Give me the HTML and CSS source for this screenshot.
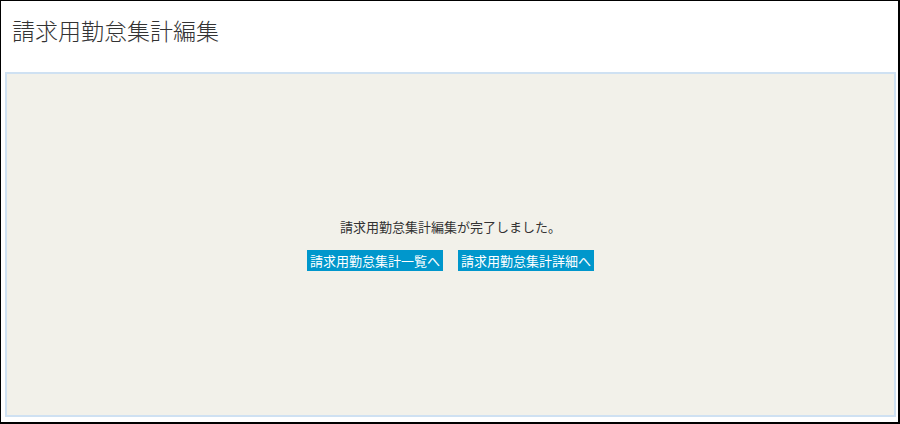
FILE: index.html
```html
<!DOCTYPE html>
<html lang="ja">
<head>
    <meta charset="UTF-8">
    <meta name="viewport" content="width=device-width, initial-scale=1.0">
    <title>請求用勤怠集計編集</title>
    <link rel="stylesheet" href="styles.css">
</head>
<body>
    <div id="page">
        <header id="pageHeader">
            <h1>請求用勤怠集計編集</h1>
        </header>
        <main id="panel">
            <p class="message">請求用勤怠集計編集が完了しました。</p>
            <div class="actions">
                <a href="#" class="linkButton">請求用勤怠集計一覧へ</a>
                <a href="#" class="linkButton">請求用勤怠集計詳細へ</a>
            </div>
        </main>
    </div>
</body>
</html>
```

FILE: styles.css
```css
html, body {
    margin: 0;
    height: 100%;
}

body {
    font-family: 'Noto Sans CJK JP', 'Noto Sans', sans-serif;
    background: #ffffff;
    color: #333333;
}

#page {
    box-sizing: border-box;
    height: 424px;
    border-style: solid;
    border-color: #000000;
    border-width: 1px 2px 2px 1px;
    display: flex;
    flex-direction: column;
}

#pageHeader {
    height: 71px;
    padding: 0 11px;
    display: flex;
    align-items: flex-start;
}

h1 {
    margin: 14px 0 0;
    font-size: 23px;
    font-weight: 300;
    line-height: 30px;
    color: #333333;
}

#panel {
    flex: 1;
    margin: 0 2px 5px 4px;
    border: 2px solid #cfe1f2;
    background-color: #f2f1ea;
    display: flex;
    flex-direction: column;
    align-items: center;
    justify-content: center;
}

.message {
    margin: 0 0 14px;
    font-size: 13px;
    line-height: 18px;
    color: #333333;
}

.actions {
    display: flex;
    gap: 15px;
}

.linkButton {
    display: inline-block;
    padding: 0 3px;
    height: 21px;
    line-height: 21px;
    font-size: 13px;
    color: #ffffff;
    background-color: #0097cc;
    text-decoration: none;
}
```
